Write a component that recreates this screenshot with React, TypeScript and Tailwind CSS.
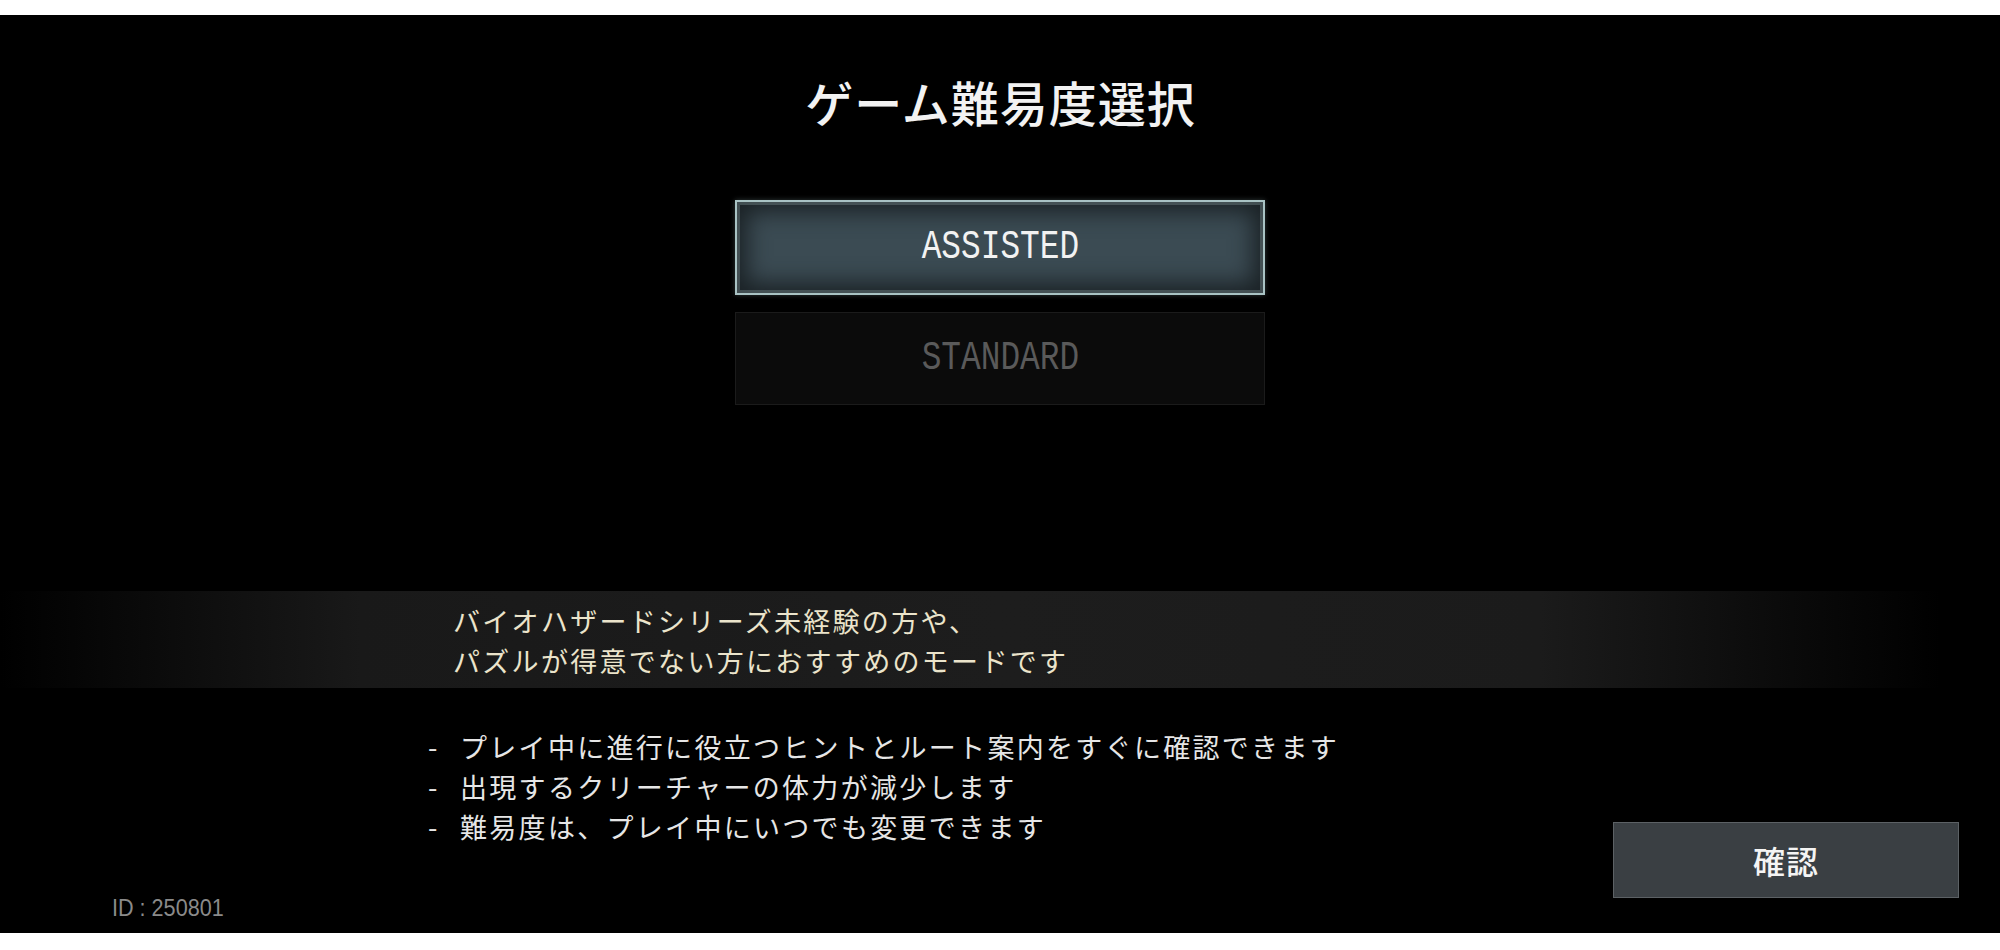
import React from "react";

const jp = "font-['Noto_Sans_CJK_JP','Noto_Sans_CJK_SC',sans-serif]";

export default function App() {
  const bullets = [
    "プレイ中に進行に役立つヒントとルート案内をすぐに確認できます",
    "出現するクリーチャーの体力が減少します",
    "難易度は、プレイ中にいつでも変更できます",
  ];
  return (
    <div className="w-[2000px] h-[950px] bg-white pt-[15px]">
      <div className="h-[918px] bg-black flex flex-col">
        <h1
          className={`${jp} mt-[62px] h-[48px] leading-[48px] text-center text-[48px] tracking-[1px] pl-[1px] text-[#f2f2f2] font-medium`}
        >
          ゲーム難易度選択
        </h1>

        <div className="mt-[75px] flex flex-col items-center">
          <div className="w-[530px] h-[95px] border-2 border-[#a9c3c4] bg-[#3b4b53] shadow-[inset_0_0_0_3px_rgba(110,128,130,0.45),inset_0_0_22px_10px_#1b2226,0_0_5px_rgba(160,190,190,0.3)] flex items-center justify-center">
            <span className="inline-block scale-x-[0.8] font-['Liberation_Mono',monospace] text-[41px] leading-none text-[#f2f2f2]">
              ASSISTED
            </span>
          </div>
          <div className="mt-[17px] w-[530px] h-[93px] border border-[#1b1b1b] bg-[#0b0b0b] flex items-center justify-center">
            <span className="inline-block scale-x-[0.8] font-['Liberation_Mono',monospace] text-[41px] leading-none text-[#5a5a5a]">
              STANDARD
            </span>
          </div>
        </div>

        <div className="mt-[186px] h-[97px] bg-[linear-gradient(90deg,rgba(29,29,29,0)_0%,#191919_18%,#1d1d1d_50%,#1b1b1b_77%,rgba(27,27,27,0)_97%)] pt-[10px] pl-[453px]">
          <p className={`${jp} text-[27px] leading-[40px] tracking-[2.3px] text-[#ebe4cb]`}>
            バイオハザードシリーズ未経験の方や、
            <br />
            パズルが得意でない方におすすめのモードです
          </p>
        </div>

        <div className="flex-1 flex">
          <div className="flex-1 flex flex-col justify-between">
            <ul className={`${jp} mt-[39px] pl-[428px] text-[27px] leading-[40px] tracking-[2.3px] text-[#e6e6e6]`}>
              {bullets.map((b) => (
                <li key={b} className="flex">
                  <span className="w-[32px] shrink-0 tracking-normal">-</span>
                  <span>{b}</span>
                </li>
              ))}
            </ul>
            <div className="pl-[112px] pb-[11px]">
              <span className="inline-block origin-left scale-x-[0.9] font-['Liberation_Sans',sans-serif] text-[24px] leading-[24px] text-[#8a8a8a]">
                ID : 250801
              </span>
            </div>
          </div>
          <div className="self-end mr-[41px] mb-[35px] w-[346px] h-[76px] bg-[#3a3f43] border border-[#5c6165] flex items-center justify-center">
            <span className={`${jp} text-[32px] leading-none tracking-[1px] text-[#f4f4f4] font-medium`}>
              確認
            </span>
          </div>
        </div>
      </div>
    </div>
  );
}
